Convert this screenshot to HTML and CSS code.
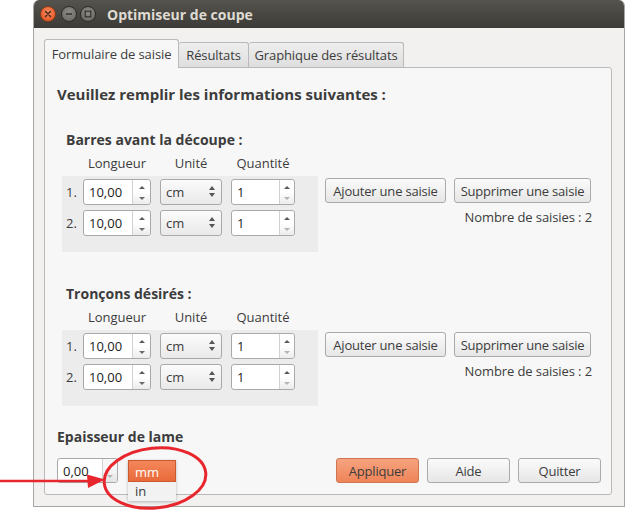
FILE: index.html
```html
<!DOCTYPE html>
<html lang="fr">
<head>
<meta charset="utf-8">
<title>Optimiseur de coupe</title>
<link rel="stylesheet" href="styles.css">
</head>
<body>
<div class="window">
  <div class="titlebar">
    <div class="wbtn close"><svg width="8" height="8" viewBox="0 0 8 8"><path d="M1.5 1.5 L6.5 6.5 M6.5 1.5 L1.5 6.5" stroke="#3a2a20" stroke-width="1.4" stroke-linecap="round"/></svg></div>
    <div class="wbtn min"><svg width="8" height="8" viewBox="0 0 8 8"><path d="M1 4 H7" stroke="#33322e" stroke-width="1.4"/></svg></div>
    <div class="wbtn"><svg width="8" height="8" viewBox="0 0 8 8"><rect x="1.2" y="1.2" width="5.6" height="5.6" fill="none" stroke="#33322e" stroke-width="1.2"/></svg></div>
    <span class="title">Optimiseur de coupe</span>
  </div>
  <div class="body">
    <div class="tabs">
      <div class="tab active t1">Formulaire de saisie</div>
      <div class="tab t2">Résultats</div>
      <div class="tab t3">Graphique des résultats</div>
    </div>
    <div class="panel">
      <h1 class="heading">Veuillez remplir les informations suivantes :</h1>

      <section class="group first">
        <h2 class="group-title">Barres avant la découpe :</h2>
        <div class="labels">
          <span class="lab lab-len">Longueur</span>
          <span class="lab lab-unit">Unité</span>
          <span class="lab lab-qty">Quantité</span>
        </div>
        <div class="rows-wrap">
          <div class="rows">
            <div class="row">
              <span class="num">1.</span>
              <div class="spin len"><span class="val">10,00</span><span class="arrows"><i class="up"></i><i class="down"></i></span></div>
              <div class="combo"><span>cm</span><span class="dbl"></span></div>
              <div class="spin qty"><span class="val">1</span><span class="arrows"><i class="up"></i><i class="down dim"></i></span></div>
            </div>
            <div class="row">
              <span class="num">2.</span>
              <div class="spin len"><span class="val">10,00</span><span class="arrows"><i class="up"></i><i class="down"></i></span></div>
              <div class="combo"><span>cm</span><span class="dbl"></span></div>
              <div class="spin qty"><span class="val">1</span><span class="arrows"><i class="up"></i><i class="down dim"></i></span></div>
            </div>
          </div>
          <div class="actions">
            <div class="btn-row">
              <button class="btn add">Ajouter une saisie</button>
              <button class="btn del">Supprimer une saisie</button>
            </div>
            <div class="count">Nombre de saisies : 2</div>
          </div>
        </div>
      </section>

      <section class="group second">
        <h2 class="group-title">Tronçons désirés :</h2>
        <div class="labels">
          <span class="lab lab-len">Longueur</span>
          <span class="lab lab-unit">Unité</span>
          <span class="lab lab-qty">Quantité</span>
        </div>
        <div class="rows-wrap">
          <div class="rows">
            <div class="row">
              <span class="num">1.</span>
              <div class="spin len"><span class="val">10,00</span><span class="arrows"><i class="up"></i><i class="down"></i></span></div>
              <div class="combo"><span>cm</span><span class="dbl"></span></div>
              <div class="spin qty"><span class="val">1</span><span class="arrows"><i class="up"></i><i class="down dim"></i></span></div>
            </div>
            <div class="row">
              <span class="num">2.</span>
              <div class="spin len"><span class="val">10,00</span><span class="arrows"><i class="up"></i><i class="down"></i></span></div>
              <div class="combo"><span>cm</span><span class="dbl"></span></div>
              <div class="spin qty"><span class="val">1</span><span class="arrows"><i class="up"></i><i class="down dim"></i></span></div>
            </div>
          </div>
          <div class="actions">
            <div class="btn-row">
              <button class="btn add">Ajouter une saisie</button>
              <button class="btn del">Supprimer une saisie</button>
            </div>
            <div class="count">Nombre de saisies : 2</div>
          </div>
        </div>
      </section>

      <h2 class="lame-title">Epaisseur de lame</h2>
      <div class="bottom">
        <div class="spin lame"><span class="val">0,00</span><span class="arrows"><i class="up blank"></i><i class="down dim"></i></span></div>
        <div class="combo-anchor">
          <div class="menu">
            <div class="item sel">mm</div>
            <div class="item">in</div>
          </div>
        </div>
        <div class="bottom-btns">
          <button class="btn primary">Appliquer</button>
          <button class="btn wide">Aide</button>
          <button class="btn wide">Quitter</button>
        </div>
      </div>
    </div>
  </div>
</div>
<svg class="annot" width="625" height="516" viewBox="0 0 625 516">
  <line x1="0" y1="481" x2="92" y2="481" stroke="#e8262d" stroke-width="2.6"/>
  <polygon points="87,474.5 105,479.5 88,488" fill="#e8262d"/>
  <ellipse cx="155" cy="478" rx="51" ry="30" transform="rotate(-6 155 478)" fill="none" stroke="#e8262d" stroke-width="3"/>
</svg>
</body>
</html>
```
FILE: styles.css
```css
* { box-sizing: border-box; }
html, body { margin: 0; padding: 0; background: #ffffff; }
body {
  font-family: "Open Sans", "Noto Sans", sans-serif;
  font-size: 13px;
  color: #3c3c3c;
  position: relative;
  width: 625px;
  height: 516px;
  overflow: hidden;
}
.window {
  margin-left: 33px;
  width: 592px;
  height: 507px;
  background: #f2f1f0;
  border-radius: 6px 6px 0 0;
  border: 1px solid #a8a6a2;
  border-top: none;
  overflow: hidden;
}
.titlebar {
  height: 28px;
  background: linear-gradient(#55534d, #3c3b37);
  display: flex;
  align-items: center;
  padding-left: 6px;
  gap: 3px;
}
.wbtn {
  width: 16px;
  height: 16px;
  border-radius: 50%;
  background: radial-gradient(circle at 50% 35%, #8c8a84, #67655f);
  border: 1px solid #2e2d29;
  display: flex;
  align-items: center;
  justify-content: center;
  flex-shrink: 0;
}
.wbtn.min { margin-left: 2px; }
.wbtn.close {
  background: radial-gradient(circle at 50% 35%, #f7865a, #e0501e);
  border-color: #8a3a18;
}
.title {
  margin-left: 8px;
  color: #dfdbd2;
  font-weight: 700;
  font-size: 14px;
}
.body {
  padding: 11px 11px 0 10px;
}
.tabs {
  display: flex;
  align-items: flex-end;
  height: 28px;
  position: relative;
  z-index: 1;
}
.tab {
  height: 25px;
  display: flex;
  align-items: center;
  justify-content: center;
  white-space: nowrap;
  border: 1px solid #b9b9b9;
  border-bottom: none;
  border-left: none;
  border-radius: 3px 3px 0 0;
  background: linear-gradient(#eeeeee, #dedede);
  color: #3c3c3c;
  font-size: 13px;
  letter-spacing: -0.1px;
}
.tab.t1 { width: 135px; }
.tab.t2 { width: 70px; }
.tab.t3 { width: 155px; }
.tab.active {
  border-left: 1px solid #b9b9b9;
  background: #f7f7f7;
  margin-bottom: -1px;
  height: 29px;
}
.panel {
  width: 568px;
  height: 428px;
  background: #f7f7f7;
  border: 1px solid #b9b9b9;
  border-radius: 0 3px 3px 3px;
  padding: 0 10px 0 12px;
}
.heading {
  margin: 16px 0 0 0;
  font-size: 15px;
  line-height: 21px;
  font-weight: 700;
  color: #3c3c3c;
}
.group { margin-left: 9px; }
.group.first { margin-top: 26px; }
.group.second { margin-top: 33px; }
.group-title, .lame-title {
  margin: 0;
  font-size: 14px;
  line-height: 18px;
  font-weight: 700;
  color: #3c3c3c;
}
.lame-title { margin-top: 22px; }
.labels {
  display: flex;
  margin-top: 6px;
  height: 16px;
  line-height: 16px;
  padding-left: 17px;
}
.lab { text-align: center; }
.lab-len { width: 68px; }
.lab-unit { width: 62px; margin-left: 9px; }
.lab-qty { width: 64px; margin-left: 9px; }
.rows-wrap {
  display: flex;
  margin-top: 5px;
}
.rows {
  margin-left: -4px;
  width: 256px;
  flex-shrink: 0;
  background: #ececec;
  padding: 2px 0 16px 4px;
  display: flex;
  flex-direction: column;
  gap: 4px;
}
.row {
  display: flex;
  align-items: center;
  height: 27px;
  gap: 9px;
}
.num { width: 8px; }
.spin {
  height: 26px;
  display: flex;
  border: 1px solid #a9a9a9;
  border-radius: 3px;
  background: #ffffff;
  flex-shrink: 0;
}
.spin .val {
  flex: 1;
  display: flex;
  align-items: center;
  padding-left: 5px;
  color: #222;
}
.spin .arrows {
  width: 18px;
  border-left: 1px solid #d2d2d2;
  display: flex;
  flex-direction: column;
  background: linear-gradient(#ffffff 50%, #ececec);
  border-radius: 0 3px 3px 0;
}
.spin .arrows i {
  flex: 1;
  position: relative;
}
.spin .arrows i::after {
  content: "";
  position: absolute;
  left: 6px;
  border-left: 3px solid transparent;
  border-right: 3px solid transparent;
}
.spin .arrows i.up::after { top: 6px; border-bottom: 3px solid #5a5a5a; }
.spin .arrows i.down::after { bottom: 4px; border-top: 3px solid #6a6a6a; }
.spin .arrows i.dim::after { border-top-color: #b4b4b4; }
.spin .arrows i.blank::after { display: none; }
.spin.len { width: 68px; }
.spin.qty { width: 64px; }
.spin.qty .arrows { width: 15px; }
.spin.qty .arrows i::after { left: 4px; }
.combo {
  width: 62px;
  height: 26px;
  flex-shrink: 0;
  border: 1px solid #a9a9a9;
  border-radius: 3px;
  background: linear-gradient(#fbfbfb, #e9e9e9);
  display: flex;
  align-items: center;
  justify-content: space-between;
  padding: 0 6px 0 5px;
}
.dbl {
  width: 6px;
  height: 11px;
  position: relative;
}
.dbl::before, .dbl::after {
  content: "";
  position: absolute;
  left: 0;
  border-left: 3px solid transparent;
  border-right: 3px solid transparent;
}
.dbl::before { top: 0; border-bottom: 4px solid #555; }
.dbl::after { bottom: 0; border-top: 4px solid #555; }
.actions {
  margin-left: 7px;
  padding-top: 2px;
  display: flex;
  flex-direction: column;
  align-items: flex-end;
  flex-shrink: 0;
}
.btn-row { display: flex; gap: 8px; }
.btn {
  font-family: inherit;
  font-size: 13px;
  color: #3c3c3c;
  height: 25px;
  padding: 0;
  white-space: nowrap;
  flex-shrink: 0;
  border: 1px solid #aaaaaa;
  border-radius: 3px;
  background: linear-gradient(#fbfbfb, #e6e6e6);
  margin: 0;
  letter-spacing: -0.2px;
}
.btn.add { width: 121px; }
.btn.del { width: 137px; }
.count {
  margin-top: 6px;
  line-height: 16px;
  margin-right: -1px;
  letter-spacing: -0.1px;
}
.bottom {
  display: flex;
  align-items: center;
  margin-top: 12px;
  height: 25px;
}
.spin.lame { width: 61px; height: 25px; }
.spin.lame .arrows { width: 15px; background: linear-gradient(#f7f7f7 40%, #e4e4e4); }
.spin.lame .arrows i::after { left: 4px; }
.combo-anchor {
  position: relative;
  width: 48px;
  height: 25px;
  margin-left: 10px;
}
.menu {
  position: absolute;
  left: 0;
  top: 2px;
  width: 48px;
  background: #f2f2f2;
  box-shadow: 0 1px 3px rgba(0,0,0,0.25);
}
.menu .item {
  height: 19px;
  line-height: 19px;
  padding-left: 7px;
  color: #3c3c3c;
}
.menu .item.sel {
  height: 22px;
  line-height: 22px;
  background: linear-gradient(#f3875a, #e96a3a);
  border: 1px solid #c9592e;
  color: #ffffff;
  padding-left: 6px;
}
.bottom-btns {
  margin-left: auto;
  display: flex;
  gap: 8px;
}
.btn.wide { width: 83px; }
.btn.primary {
  width: 83px;
  background: linear-gradient(#f6a37f, #ef8458);
  border-color: #cf7552;
}
.annot {
  position: absolute;
  left: 0;
  top: 0;
  pointer-events: none;
}
```
